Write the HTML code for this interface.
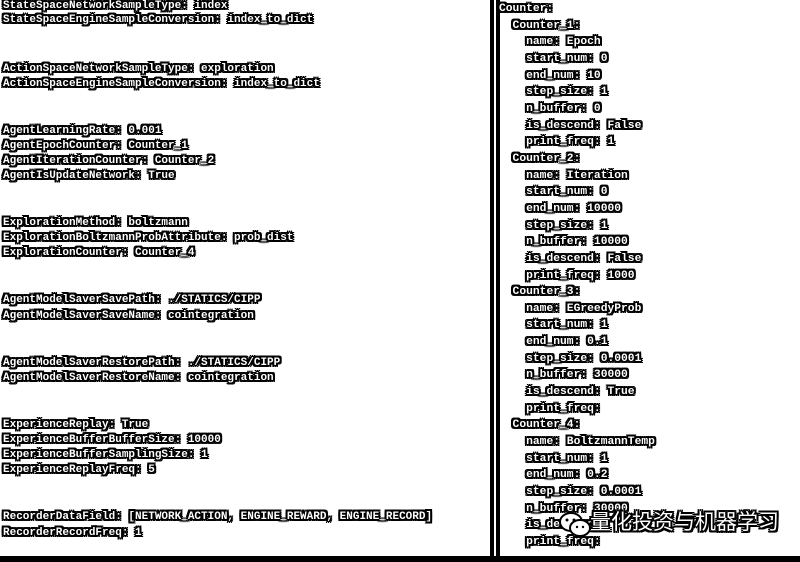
<!DOCTYPE html>
<html><head><meta charset="utf-8"><style>
body{margin:0;width:800px;height:562px;background:#fff;position:relative;overflow:hidden}
.t{position:absolute;font-family:"Liberation Mono",monospace;font-weight:bold;font-size:11px;line-height:14px;color:#fff;white-space:pre;
text-shadow:1px 0 #000,-1px 0 #000,0 1px #000,0 -1px #000,1px 1px #000,-1px -1px #000,1px -1px #000,-1px 1px #000,2px 0 #000,-2px 0 #000,0 2px #000,0 -2px #000,2px 2px #000,-2px 2px #000,2px -2px #000,-2px -2px #000}
.b{position:absolute;background:#000}
.w{position:absolute;left:590px;top:510px;font-family:"Liberation Sans","Noto Sans CJK SC",sans-serif;font-size:21px;line-height:26px;color:#fff;white-space:pre;
text-shadow:1px 0 #000,-1px 0 #000,0 1px #000,0 -1px #000,2px 0 #000,-2px 0 #000,0 2px #000,0 -2px #000,2px 2px #000,-2px -2px #000,2px -2px #000,-2px 2px #000}
</style></head><body>
<div class="b" style="left:490px;top:0;width:4px;height:562px"></div>
<div class="b" style="left:496px;top:0;width:4px;height:562px"></div>
<div class="b" style="left:0;top:556px;width:800px;height:6px"></div>

<div class="t" style="left:3px;top:-1px">StateSpaceNetworkSampleType: index</div>
<div class="t" style="left:3px;top:13px">StateSpaceEngineSampleConversion: index_to_dict</div>
<div class="t" style="left:3px;top:62px">ActionSpaceNetworkSampleType: exploration</div>
<div class="t" style="left:3px;top:77px">ActionSpaceEngineSampleConversion: index_to_dict</div>
<div class="t" style="left:3px;top:124px">AgentLearningRate: 0.001</div>
<div class="t" style="left:3px;top:139px">AgentEpochCounter: Counter_1</div>
<div class="t" style="left:3px;top:154px">AgentIterationCounter: Counter_2</div>
<div class="t" style="left:3px;top:169px">AgentIsUpdateNetwork: True</div>
<div class="t" style="left:3px;top:216px">ExplorationMethod: boltzmann</div>
<div class="t" style="left:3px;top:231px">ExplorationBoltzmannProbAttribute: prob_dist</div>
<div class="t" style="left:3px;top:246px">ExplorationCounter: Counter_4</div>
<div class="t" style="left:3px;top:293px">AgentModelSaverSavePath: ./STATICS/CIPP</div>
<div class="t" style="left:3px;top:309px">AgentModelSaverSaveName: cointegration</div>
<div class="t" style="left:3px;top:356px">AgentModelSaverRestorePath: ./STATICS/CIPP</div>
<div class="t" style="left:3px;top:371px">AgentModelSaverRestoreName: cointegration</div>
<div class="t" style="left:3px;top:418px">ExperienceReplay: True</div>
<div class="t" style="left:3px;top:433px">ExperienceBufferBufferSize: 10000</div>
<div class="t" style="left:3px;top:448px">ExperienceBufferSamplingSize: 1</div>
<div class="t" style="left:3px;top:463px">ExperienceReplayFreq: 5</div>
<div class="t" style="left:3px;top:510px">RecorderDataField: [NETWORK_ACTION, ENGINE_REWARD, ENGINE_RECORD]</div>
<div class="t" style="left:3px;top:526px">RecorderRecordFreq: 1</div>

<div class="t" style="left:499px;top:1px;line-height:16.66px;font-size:11.3px">Counter:
  Counter_1:
    name: Epoch
    start_num: 0
    end_num: 10
    step_size: 1
    n_buffer: 0
    is_descend: False
    print_freq: 1
  Counter_2:
    name: Iteration
    start_num: 0
    end_num: 10000
    step_size: 1
    n_buffer: 10000
    is_descend: False
    print_freq: 1000
  Counter_3:
    name: EGreedyProb
    start_num: 1
    end_num: 0.1
    step_size: 0.0001
    n_buffer: 30000
    is_descend: True
    print_freq:
  Counter_4:
    name: BoltzmannTemp
    start_num: 1
    end_num: 0.2
    step_size: 0.0001
    n_buffer: 30000
    is_descend:
    print_freq:</div>

<svg style="position:absolute;left:558px;top:511px" width="34" height="28" viewBox="0 0 34 28">
<ellipse cx="13" cy="11" rx="11" ry="9" fill="#fff" stroke="#000" stroke-width="2"/>
<ellipse cx="22" cy="17" rx="10" ry="8" fill="#fff" stroke="#000" stroke-width="2"/>
<circle cx="9" cy="9" r="1.5" fill="#000"/><circle cx="16" cy="9" r="1.5" fill="#000"/>
<circle cx="19" cy="16" r="1.2" fill="#000"/><circle cx="25" cy="16" r="1.2" fill="#000"/>
</svg>
<div class="w">量化投资与机器学习</div>
</body></html>
